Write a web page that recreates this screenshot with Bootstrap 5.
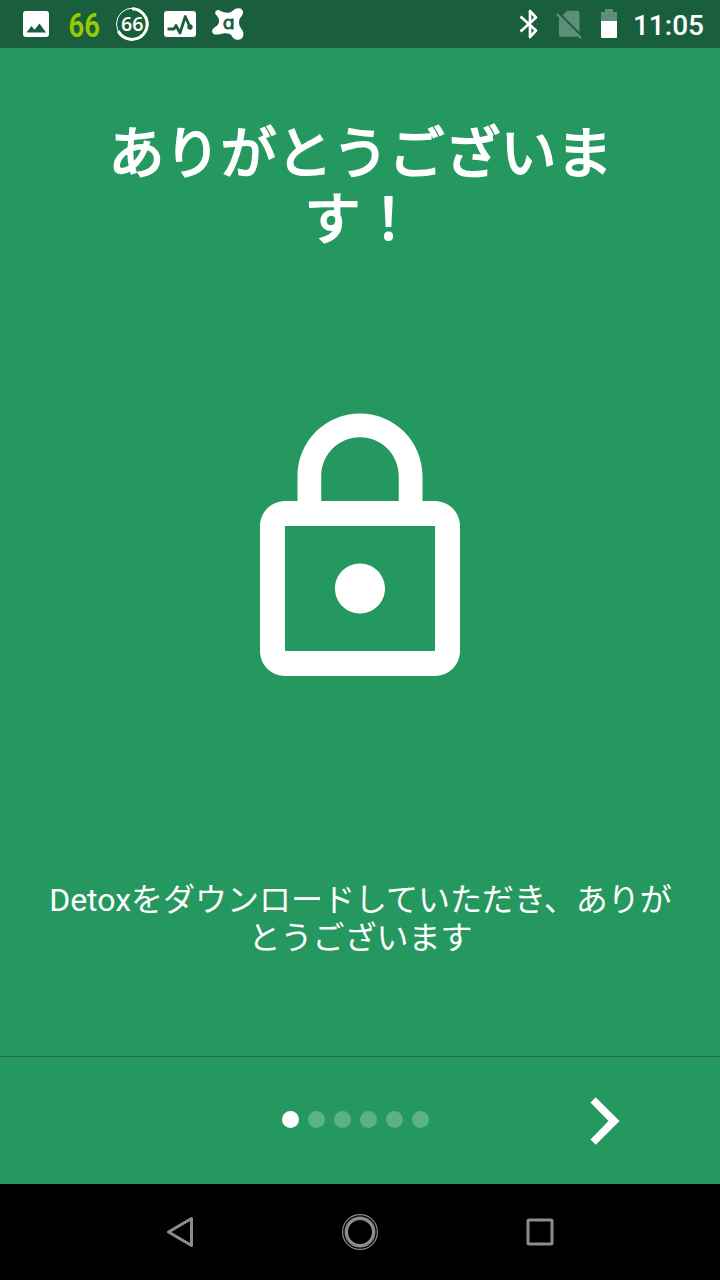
<!DOCTYPE html>
<html lang="ja">
<head>
  <meta charset="UTF-8">
  <meta name="viewport" content="width=device-width, initial-scale=1">
  <title>Detox</title>
  <link href="https://cdn.jsdelivr.net/npm/bootstrap@5.3.0/dist/css/bootstrap.min.css" rel="stylesheet">
  <style>
    body {
      background: #259860;
      font-family: Roboto, "Noto Sans CJK JP", sans-serif;
    }
    svg {
      display: block;
      flex: none;
    }
    .status-bar {
      height: 48px;
      background: #195f3e;
      padding: 0 16px 0 12px;
    }
    .status-icon {
      width: 48px;
    }
    .battery {
      margin-left: 18px;
    }
    .clock {
      font-size: 28px;
      font-weight: 500;
      line-height: 32px;
      width: 72px;
      margin-left: 15px;
      padding-top: 3px;
    }
    .intro-title {
      font-size: 56px;
      font-weight: 400;
      line-height: 66px;
      width: 514px;
      padding-left: 1px;
      margin-top: 73px;
      -webkit-text-stroke: 2px #fff;
    }
    .lock {
      margin-top: 148px;
    }
    .intro-text {
      font-size: 32px;
      line-height: 38px;
      padding: 0 39px 0 40px;
      margin-top: 180px;
    }
    .pager {
      height: 128px;
      border-top: 1px solid #1e6a45;
    }
    .dots {
      gap: 9px;
      padding: 0 10px 3px 0;
    }
    .dot {
      width: 17px;
      height: 17px;
      border-radius: 50%;
      background: rgba(255, 255, 255, .25);
    }
    .dot.active {
      background: #fff;
    }
    .next {
      padding-left: 10px;
    }
    .system-nav {
      height: 96px;
    }
    .system-nav .btn {
      width: 180px;
    }
  </style>
</head>
<body class="text-white">
  <div class="d-flex flex-column vh-100 overflow-hidden">
    <!-- Status bar -->
    <header class="status-bar d-flex align-items-center flex-shrink-0">
      <div class="status-icon">
        <svg width="48" height="48" fill="#fff">
          <path fill-rule="evenodd" d="M14 11h20a3 3 0 0 1 3 3v20a3 3 0 0 1-3 3H14a3 3 0 0 1-3-3V14a3 3 0 0 1 3-3zM14.500 32.500h19.500l-6.500-9-5 6.200-3-3.700z"/>
        </svg>
      </div>
      <div class="status-icon">
        <svg width="48" height="48">
          <text x="8.500" y="36.500" textLength="31.500" lengthAdjust="spacingAndGlyphs" font-family="Roboto" font-size="33.500" font-weight="600" fill="#99cc00">66</text>
        </svg>
      </div>
      <div class="status-icon">
        <svg width="48" height="48" fill="none" stroke="#fff">
          <circle cx="24.300" cy="24" r="15.800"/>
          <path stroke-width="3" d="M24 8.800A15.300 15.300 0 1 1 10.200 31"/>
          <text x="13" y="31" textLength="22.500" lengthAdjust="spacingAndGlyphs" font-family="Open Sans" font-size="19" font-weight="600" fill="#fff" stroke="none">66</text>
        </svg>
      </div>
      <div class="status-icon">
        <svg width="48" height="48">
          <rect x="8" y="11" width="32" height="26" rx="3" fill="#fff"/>
          <path d="M11.500 29H18l2-3.500 4 7.500 5.300-16.500L34 27" fill="none" stroke="#195f3e" stroke-width="2.800" stroke-linejoin="round"/>
          <circle cx="34" cy="27" r="2.700" fill="#195f3e"/>
        </svg>
      </div>
      <div class="status-icon">
        <svg width="48" height="48">
          <path fill="#fff" d="M11.300 13.500c-.5-2.500 2-4.200 4.500-3 3 1.700 6.500 2.700 10 1.900 3.200-.9 4.200-4.200 8.700-4.200 3 0 4.700 2 4.500 4.600-.3 3.200-3 4.200-3.800 7.700-.7 3 .3 6 2.300 8.500 1.600 2 2.200 4 1.800 6.500-.7 3-3 4.700-6.300 4.300-3-.4-4.500-2.300-5.500-4.300-1.500-2-4.500-2.500-8.500-2-2.500.4-4.500 1.200-7 1-3.500 0-4.700-3-3.300-5.300 1.200-2 4.300-3 5.800-5.500 1.300-3 .3-5.500-1.200-7.500-.9-1.200-1.800-1.700-2-2.700z"/>
          <text x="18.800" y="29" textLength="12" lengthAdjust="spacingAndGlyphs" font-family="DejaVu Sans" font-size="18.500" stroke="#195f3e" stroke-width=".8" fill="#195f3e">ɑ</text>
        </svg>
      </div>

      <svg class="ms-auto" width="24" height="36" viewBox="0 0 24 36" fill="none" stroke="#fff" stroke-width="2.700" stroke-linejoin="round">
        <path d="M5.500 10.500L21 24.500l-6 6.500V5l6 6.500L5.500 25.500"/>
      </svg>
      <svg class="ms-3" width="28" height="32" viewBox="0 0 28 32">
        <path fill="#5e8f78" d="M12 2.700h10a2.500 2.500 0 0 1 2.500 2.500v21a2.500 2.500 0 0 1-2.500 2.500H6.500A2.500 2.500 0 0 1 4 26.200V10.700z"/>
        <path stroke="#195f3e" stroke-width="2" d="M3.500 4.700L28 29.200"/>
        <path stroke="#5e8f78" stroke-width="2.200" d="M1.700 5.800L26 30.100"/>
      </svg>
      <svg class="battery" width="16" height="30" viewBox="0 0 16 30">
        <path fill="#5e8f78" d="M4 0h8v3h4v9H0V3h4z"/>
        <path fill="#fff" d="M0 12h16v16a1 1 0 0 1-1 1H1a1 1 0 0 1-1-1z"/>
      </svg>
      <div class="clock text-end text-nowrap">11:05</div>
    </header>

    <!-- Slide -->
    <main class="flex-grow-1 d-flex flex-column align-items-center text-center">
      <h1 class="intro-title mb-0">ありがとうございます！</h1>
      <svg class="lock" width="300" height="300" viewBox="0 0 24 24" fill="#fff">
        <path d="M12 17c1.100 0 2-.9 2-2s-.9-2-2-2-2 .9-2 2 .9 2 2 2zm6-9h-1V6c0-2.760-2.240-5-5-5S7 3.240 7 6v2H6c-1.100 0-2 .9-2 2v10c0 1.100.9 2 2 2h12c1.100 0 2-.9 2-2V10c0-1.100-.9-2-2-2zM8.900 6c0-1.710 1.390-3.100 3.100-3.100s3.100 1.390 3.100 3.100v2H8.900V6zM18 20H6V10h12v10z"/>
      </svg>
      <p class="intro-text mb-0">Detoxをダウンロードしていただき、ありがとうございます</p>
    </main>

    <!-- Pager -->
    <footer class="pager row g-0 align-items-center flex-shrink-0">
      <div class="col-4"></div>
      <div class="col-4 dots d-flex justify-content-center">
        <span class="dot active"></span>
        <span class="dot"></span>
        <span class="dot"></span>
        <span class="dot"></span>
        <span class="dot"></span>
        <span class="dot"></span>
      </div>
      <div class="col-4 next d-flex justify-content-center">
        <svg width="32" height="50" viewBox="0 0 32 50" fill="#fff">
          <path d="M6.700 1.200L30.600 25 6.700 48.800 1.500 43.500 19.500 25 1.500 6.500z"/>
        </svg>
      </div>
    </footer>

    <!-- System navigation -->
    <nav class="system-nav bg-black d-flex justify-content-center align-items-center flex-shrink-0">
      <button class="btn p-0 border-0 d-flex justify-content-center" aria-label="Back">
        <svg width="36" height="36" fill="none" stroke="#8c8c8c" stroke-width="3" stroke-linejoin="round">
          <path d="M6.500 18L29.500 4.500v27z"/>
        </svg>
      </button>
      <button class="btn p-0 border-0 d-flex justify-content-center" aria-label="Home">
        <svg width="38" height="38" fill="none" stroke="#8c8c8c">
          <circle cx="19" cy="19" r="17.400" stroke-width="1.200"/>
          <circle cx="19" cy="19" r="13.700" stroke-width="3.400"/>
        </svg>
      </button>
      <button class="btn p-0 border-0 d-flex justify-content-center" aria-label="Overview">
        <svg width="36" height="36" fill="none" stroke="#8c8c8c" stroke-width="3">
          <rect x="6" y="6" width="24" height="24" rx="1"/>
        </svg>
      </button>
    </nav>
  </div>

  <script src="https://cdn.jsdelivr.net/npm/bootstrap@5.3.0/dist/js/bootstrap.bundle.min.js"></script>
</body>
</html>
